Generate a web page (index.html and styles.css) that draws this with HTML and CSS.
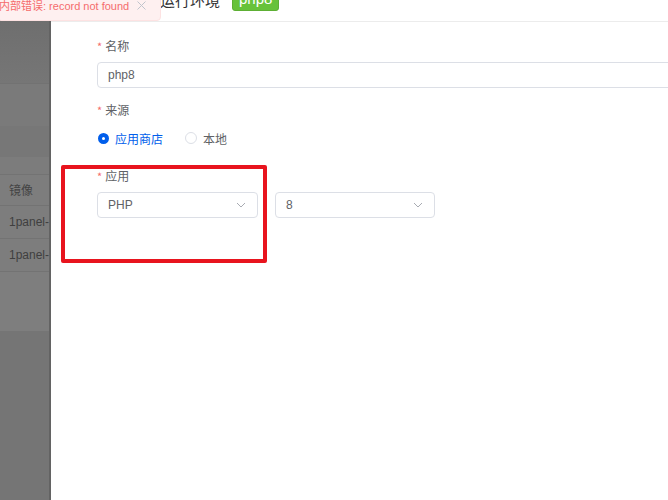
FILE: index.html
```html
<!DOCTYPE html>
<html>
	<head>
		<meta charset="utf-8">
		<title>运行环境</title>
		<link rel="stylesheet" href="styles.css">
	</head>
	<body>
		<div class="page">
			<!--底层页面（被遮罩）-->
			<div class="under">
				<div class="u-row u-top"></div>
				<div class="u-row u-tabs"></div>
				<div class="u-row u-bar"></div>
				<div class="u-row u-gap"></div>
				<div class="u-row u-th">镜像</div>
				<div class="u-row u-td">1panel-php</div>
				<div class="u-row u-td">1panel-php</div>
				<div class="u-row u-foot"></div>
				<div class="u-rest"></div>
			</div>

			<!--抽屉-->
			<div class="drawer">
				<header class="d-head">
					<div class="d-title">
						<span class="title">编辑运行环境</span>
						<span class="tag">php8</span>
					</div>
				</header>

				<div class="form">
					<div class="item">
						<label class="label"><i>*</i>名称</label>
						<div class="input">php8</div>
					</div>
					<div class="item item-radio">
						<label class="label"><i>*</i>来源</label>
						<div class="radios">
							<span class="radio on"><b></b>应用商店</span>
							<span class="radio"><b></b>本地</span>
						</div>
					</div>
					<div class="item item-app">
						<label class="label"><i>*</i>应用</label>
						<div class="selects">
							<div class="select">PHP
								<svg width="10" height="6" viewBox="0 0 10 6"><path d="M1 1l4 4 4-4" fill="none" stroke="#a8abb2" stroke-width="1"/></svg>
							</div>
							<div class="select select2">8
								<svg width="10" height="6" viewBox="0 0 10 6"><path d="M1 1l4 4 4-4" fill="none" stroke="#a8abb2" stroke-width="1"/></svg>
							</div>
						</div>
					</div>
				</div>
			</div>
		</div>

		<!--消息提示-->
		<div class="toast">
			<span class="msg">内部错误: record not found</span>
			<svg class="close" width="9" height="9" viewBox="0 0 9 9"><path d="M.5.5l8 8M8.5.5l-8 8" stroke="#c0c4cc" stroke-width="1"/></svg>
		</div>

		<!--标注框-->
		<div class="mark"></div>
	</body>
</html>
```
FILE: styles.css
```css
body,html{
	margin: 0;
}
body{
	width: 668px;
	height: 500px;
	overflow: hidden;
	position: relative;
	font-family: "Liberation Sans", "Noto Sans CJK SC", sans-serif;
	font-size: 12px;
	color: #606266;
}
.page{
	display: flex;
	height: 500px;
}
.under{
	width: 49px;
	flex: none;
	display: flex;
	flex-direction: column;
	background: #757575;
	border-right: 2px solid #636363;
	overflow: hidden;
	white-space: nowrap;
	color: #3f3f3f;
}
.u-row{
	box-sizing: border-box;
	padding-left: 9px;
}
.u-top{
	height: 83px;
	background: linear-gradient(#6c6c6c, #767676);
}
.u-tabs{
	height: 43px;
	background: #7a7a7a;
	border-top: 1px solid #727272;
}
.u-bar{
	height: 31px;
	background: #777777;
}
.u-gap{
	height: 17px;
	background: #7c7c7c;
}
.u-th{
	height: 32px;
	line-height: 32px;
	background: #7d7d7d;
	border-top: 1px solid #737373;
	border-bottom: 1px solid #737373;
	color: #444;
}
.u-td{
	height: 33px;
	line-height: 32px;
	background: #7d7d7d;
	border-bottom: 1px solid #737373;
	font-size: 12px;
}
.u-foot{
	height: 59px;
	background: #7e7e7e;
}
.u-rest{
	flex: 1;
	background: #757575;
}
.drawer{
	flex: 1;
	background: #fff;
	overflow: hidden;
}
.d-head{
	height: 21px;
	border-bottom: 1px solid #ececec;
	overflow: hidden;
}
.d-title{
	display: flex;
	align-items: center;
	margin-top: -13px;
	height: 24px;
	padding-left: 79px;
}
.title{
	font-size: 15px;
	color: #303133;
	font-family: "Noto Sans CJK SC", sans-serif;
}
.tag{
	margin-left: 12px;
	height: 22px;
	line-height: 22px;
	padding: 0 6px;
	background: #67c23a;
	border: 1px solid #5daf34;
	border-radius: 3px;
	color: #fff;
	font-size: 15px;
}
.form{
	padding: 16px 0 0 46px;
}
.label{
	display: block;
	height: 16px;
	line-height: 16px;
	margin-bottom: 8px;
	font-family: "Noto Sans CJK SC", sans-serif;
	font-size: 12px;
	color: #606266;
}
.label i{
	font-style: normal;
	color: #f56c6c;
	font-size: 11px;
	margin-right: 3px;
	vertical-align: top;
}
.input{
	box-sizing: border-box;
	width: 640px;
	height: 26px;
	line-height: 24px;
	padding-left: 10px;
	border: 1px solid #dcdfe6;
	border-radius: 4px;
	font-size: 12px;
}
.item{
	margin-bottom: 14px;
}
.item-radio .label{
	margin-bottom: 10px;
}
.item-radio{
	margin-bottom: 20px;
}
.radios{
	display: flex;
	height: 20px;
	align-items: center;
	font-family: "Noto Sans CJK SC", sans-serif;
}
.radio{
	display: flex;
	align-items: center;
	margin-right: 22px;
	color: #606266;
}
.radio b{
	box-sizing: border-box;
	width: 12px;
	height: 12px;
	border-radius: 50%;
	border: 1px solid #dcdfe6;
	margin-right: 6px;
	background: #fff;
}
.radio.on{
	color: #005eeb;
}
.radio.on b{
	border: 4px solid #005eeb;
	margin-left: 1px;
	width: 11px;
	height: 11px;
}
.selects{
	display: flex;
	gap: 17px;
}
.select{
	box-sizing: border-box;
	display: flex;
	align-items: center;
	justify-content: space-between;
	width: 161px;
	height: 26px;
	padding: 0 11px 0 10px;
	border: 1px solid #dcdfe6;
	border-radius: 4px;
	font-size: 12px;
}
.select2{
	width: 160px;
}
.toast{
	position: absolute;
	left: -3px;
	top: -19px;
	box-sizing: border-box;
	width: 164px;
	height: 40px;
	padding: 18px 0 0 1px;
	background: #fef0f0;
	border: 1px solid #fde2e2;
	border-radius: 4px;
	color: #f56c6c;
	font-size: 11px;
	line-height: 14px;
	display: flex;
	white-space: nowrap;
}
.toast .msg{
	margin-top: -1px;
}
.toast .close{
	margin: 1px 0 0 8px;
}
.mark{
	position: absolute;
	left: 61px;
	top: 165px;
	width: 198px;
	height: 90px;
	border: 4px solid #e8141e;
	border-radius: 2px;
}
```
